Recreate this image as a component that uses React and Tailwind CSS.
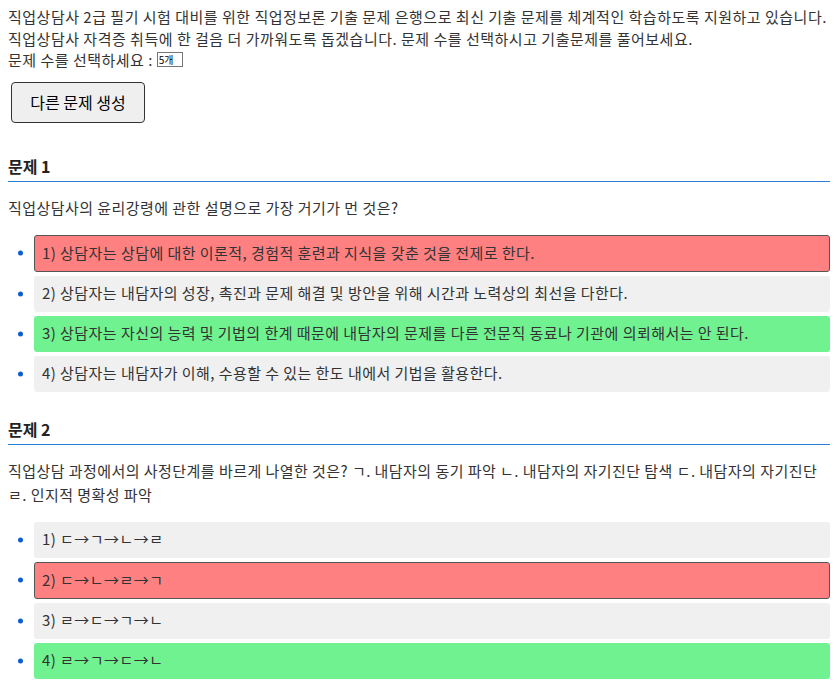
import React from "react";

const font = { fontFamily: '"Noto Sans CJK KR", "Noto Sans", sans-serif' };

function Option({ text, kind }) {
  const base = "rounded-[3px] px-2 h-[36px] flex items-center text-[15px] tracking-[0.45px] text-[#333] whitespace-nowrap";
  const cls =
    kind === "wrong"
      ? "bg-[#ff8080] border border-solid border-[#555] h-[37px] px-[7px]"
      : kind === "right"
      ? "bg-[#70f290]"
      : "bg-[#f0f0f0]";
  return (
    <li className="relative mb-[4px] pl-[26px]">
      <span className="absolute left-[10px] top-1/2 -translate-y-1/2 w-[5px] h-[5px] rounded-full bg-[#0b5fcf]" />
      <div className={base + " " + cls}>{text}</div>
    </li>
  );
}

function Question({ num, children, options }) {
  return (
    <section>
      <h3 className="text-[16px] font-bold text-[#222] pb-[2px] border-b border-solid border-b-[#2a80d8] leading-[26px]">
        문제 {num}
      </h3>
      <div className="text-[15px] tracking-[0.45px] text-[#333] leading-[24px] mt-[14px]">{children}</div>
      <ul className="mt-[15px]">
        {options.map((o, i) => (
          <Option key={i} text={o.t} kind={o.k} />
        ))}
      </ul>
    </section>
  );
}

export default function App() {
  return (
    <div className="bg-white min-h-[694px] pl-2 pr-[10px] pt-[6px]" style={font}>
      <div className="text-[15px] tracking-[0.5px] text-[#333] leading-[21.5px]">
        <div className="whitespace-nowrap">직업상담사 2급 필기 시험 대비를 위한 직업정보론 기출 문제 은행으로 최신 기출 문제를 체계적인 학습하도록 지원하고 있습니다.</div>
        <div className="whitespace-nowrap">직업상담사 자격증 취득에 한 걸음 더 가까워도록 돕겠습니다. 문제 수를 선택하시고 기출문제를 풀어보세요.</div>
        <div className="flex items-center">
          <span>문제 수를 선택하세요 :&nbsp;</span>
          <span className="inline-flex items-center h-[15px] w-[26px] border border-solid border-[#767676] text-[10px] tracking-normal leading-none pl-[1px] text-black">5개</span>
        </div>
      </div>
      <button className="mt-[11px] ml-[3px] w-[134px] h-[41px] rounded-[4px] border border-solid border-[#333] bg-[#efefef] text-[16px] text-black">
        다른 문제 생성
      </button>
      <div className="mt-[30px]">
        <Question
          num={1}
          options={[
            { t: "1) 상담자는 상담에 대한 이론적, 경험적 훈련과 지식을 갖춘 것을 전제로 한다.", k: "wrong" },
            { t: "2) 상담자는 내담자의 성장, 촉진과 문제 해결 및 방안을 위해 시간과 노력상의 최선을 다한다.", k: "" },
            { t: "3) 상담자는 자신의 능력 및 기법의 한계 때문에 내담자의 문제를 다른 전문직 동료나 기관에 의뢰해서는 안 된다.", k: "right" },
            { t: "4) 상담자는 내담자가 이해, 수용할 수 있는 한도 내에서 기법을 활용한다.", k: "" },
          ]}
        >
          직업상담사의 윤리강령에 관한 설명으로 가장 거기가 먼 것은?
        </Question>
        <div className="mt-[24px]">
          <Question
            num={2}
            options={[
              { t: "1) ㄷ→ㄱ→ㄴ→ㄹ", k: "" },
              { t: "2) ㄷ→ㄴ→ㄹ→ㄱ", k: "wrong" },
              { t: "3) ㄹ→ㄷ→ㄱ→ㄴ", k: "" },
              { t: "4) ㄹ→ㄱ→ㄷ→ㄴ", k: "right" },
            ]}
          >
            <div className="whitespace-nowrap">
              직업상담 과정에서의 사정단계를 바르게 나열한 것은? ㄱ. 내담자의 동기 파악 ㄴ. 내담자의 자기진단 탐색 ㄷ. 내담자의 자기진단
            </div>
            <div>ㄹ. 인지적 명확성 파악</div>
          </Question>
        </div>
      </div>
    </div>
  );
}
